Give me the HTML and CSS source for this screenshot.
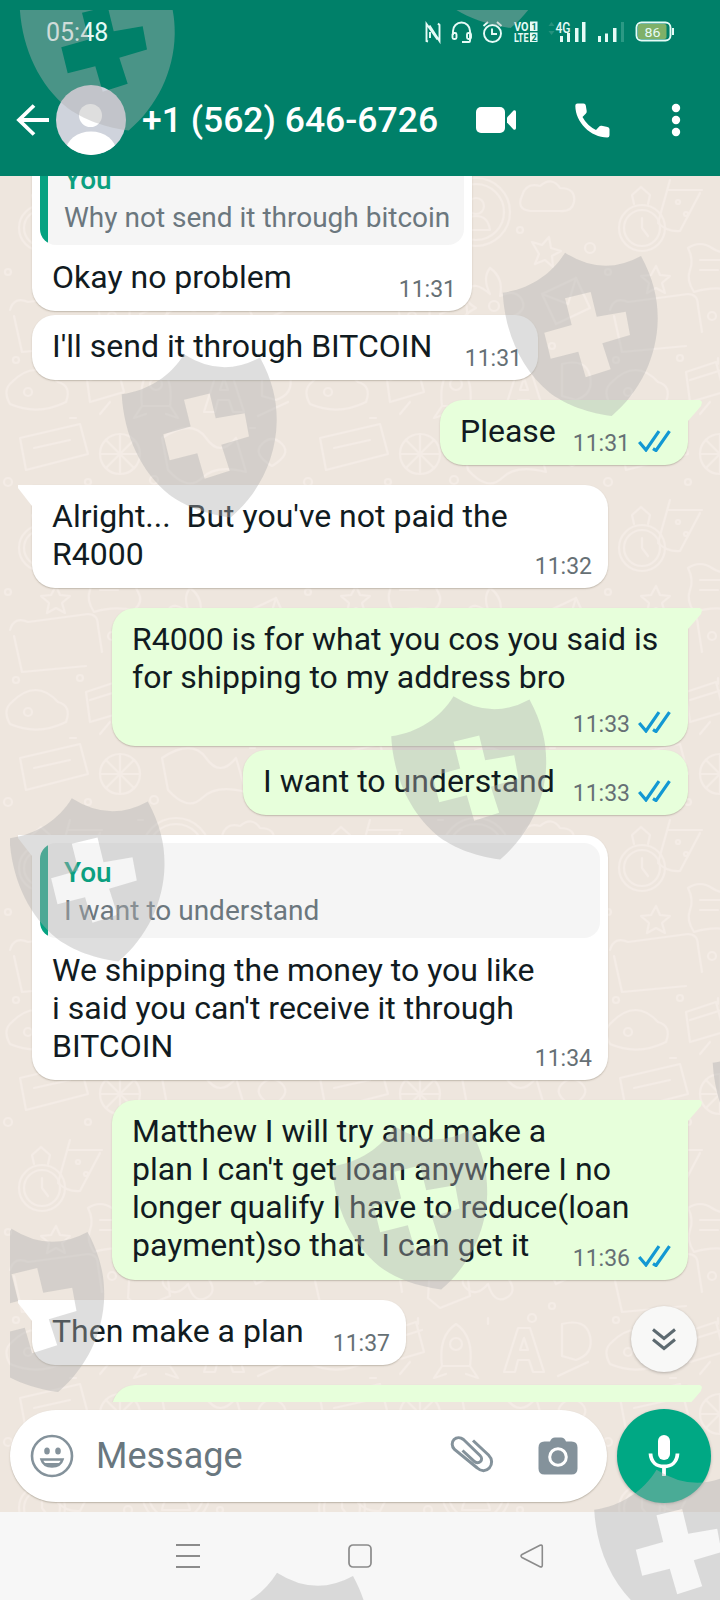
FILE: index.html
```html
<!DOCTYPE html>
<html lang="en">
<head>
<meta charset="utf-8">
<title>Chat</title>
<link rel="stylesheet" href="styles.css">
</head>
<body>
<svg class="defs" width="0" height="0">
  <defs>
    <symbol id="ticks" viewBox="0 0 33 22"><path d="M1.2 12 8 20 21 1.2M15 18.600l3 1.900L31.500 1.200" fill="none" stroke="#1398d3" stroke-width="3.200"/></symbol>
    <pattern id="doodles" width="300" height="320" patternUnits="userSpaceOnUse">
      <g fill="none" stroke="#f4ece6" stroke-width="2.200" stroke-linejoin="round" stroke-linecap="round">
        <circle cx="42" cy="52" r="23"/><circle cx="42" cy="52" r="18"/><path d="M34 28l-2-9 9-8 9 8-2 9M42 42v10l6 8"/>
        <path d="M70 4 58 47q9 9 22 8l20-38M68 14h34"/><circle cx="78" cy="26" r="2"/><circle cx="86" cy="38" r="2"/>
        <path d="M56 90l4 9 10 1-8 7 3 10-9-5-9 5 2-10-8-7 10-1z"/>
        <path d="M88 72q12-8 24 0t24 2q-4 12 2 22t-4 18q-22-4-40 2-8-12-4-22t-2-22zM100 84h22M100 94h18"/>
        <path d="M10 134q4-14 18-8l60-8q10 0 10 12l4 26M14 140l8 36 64-6"/>
        <circle cx="176" cy="36" r="34"/><circle cx="176" cy="36" r="28"/><circle cx="176" cy="30" r="8"/><path d="M162 54q2-14 14-14t14 14z"/>
        <path d="M222 20q4-14 18-10 12-10 20 2 16 0 14 14-2 10-14 9h-30q-14-2-8-15z"/>
        <path d="M232 66l10 3 7-8 2 11 10 3-9 5 1 11-8-7-10 4 4-10z"/>
        <path d="M130 130l24-12 12 8 4 34-30 12-12-10zM140 138l20-8"/>
        <path d="M190 92q14 10 10 28 16-8 22 4t-14 18q10 14-2 20t-18-14q-12 14-22 4t10-20q-14-8-8-18t22 4q-8-16 0-26z"/><circle cx="194" cy="130" r="5"/>
        <path d="M242 118l34-16 14 30-34 16zM242 118l26 10 8-26"/>
        <path d="M12 206q24-24 46 0 14 4 8 20-28 14-56 2-8-14 2-22z"/><circle cx="28" cy="216" r="4"/>
        <path d="M86 196l30-10 8 30-34 10zM90 204l32-10M100 238l10-12"/>
        <path d="M142 230q-4-30 14-42 18 12 14 42zM142 230l-8 12 12-4M170 230l8 12-12-4"/><circle cx="156" cy="208" r="6"/>
        <path d="M204 236l14-44h12l14 44h-11l-4-12h-11l-3 12zM220 214h8l-4-12z"/>
        <path d="M262 188q24-6 28 12t-14 24l-14-4zM258 240l30-14"/>
        <path d="M20 262l60-14 8 30-62 16zM34 272l36-8"/><circle cx="120" cy="278" r="20"/><path d="M106 264l28 28M134 264l-28 28M120 258v40M100 278h40"/>
        <path d="M162 262q30-20 44 0t30 0l10 34q-30-8-44 6t-34-8z"/><path d="M262 268q10-10 20 0t-10 22q-20-12-10-22z"/>
        <circle cx="128" cy="54" r="4"/><circle cx="112" cy="140" r="4"/><circle cx="232" cy="182" r="4"/><circle cx="80" cy="182" r="3"/><circle cx="8" cy="96" r="3"/><circle cx="290" cy="72" r="5"/><circle cx="220" cy="54" r="3"/><circle cx="16" cy="184" r="3"/><circle cx="154" cy="304" r="4"/><circle cx="88" cy="306" r="3"/><circle cx="252" cy="170" r="3"/><circle cx="8" cy="306" r="4"/><path d="M138 4h5M118 182v6M188 182v6M70 242h6M250 252h5"/>
      </g>
    </pattern>
  </defs>
</svg>
<div class="phone">
  <header class="header">
    <div class="status">
      <span class="clock">05:48</span>
      <svg class="status-icons" width="256" height="30" viewBox="0 0 256 30">
        <g fill="none" stroke="#e6fbf7" stroke-width="1.900">
          <path d="M4 24.500 2.500 24V7L13.500 22.500M5.500 8.500 15.500 24V8L14 6.500M6 15v6"/>
          <path d="M29 18v-4a8.500 8.500 0 0 1 17 0v4M46 18v6q0 1-1 1h-7"/>
          <rect x="28.500" y="16" width="4" height="6" rx="1.500"/><rect x="43" y="16" width="4" height="6" rx="1.500"/>
          <circle cx="68.500" cy="16.500" r="8.500"/><path d="M68 11.500v5.500h5M59.500 9l4.500-4M77.500 9 73 5"/>
          <rect x="212.500" y="5.500" width="34" height="18" rx="5"/>
        </g>
        <rect x="214" y="7" width="28.500" height="15" rx="2" fill="#7fb068"/><path d="M248 11h2v7h-2z" fill="#e6fbf7"/>
        <g fill="#e6fbf7">
          <rect x="106" y="4.500" width="7.500" height="9.500"/><rect x="106" y="15.500" width="7.500" height="9.500"/>
          <path d="M136 19h3v6h-3zM143 16h3v9h-3zM151 11h3.500v14H151zM158 5h3.500v20H158zM174 19h3v6h-3zM181 16.500h3v8.500h-3zM189 11h3.500v14H189z"/>
          <text x="90" y="14" class="tiny" textLength="14.500" lengthAdjust="spacingAndGlyphs">VO</text>
          <text x="90" y="25" class="tiny" textLength="14.500" lengthAdjust="spacingAndGlyphs">LTE</text>
          <text x="131.500" y="15.500" class="net" textLength="15" lengthAdjust="spacingAndGlyphs">4G</text>
          <text x="220.500" y="19.500" class="batt" textLength="16" lengthAdjust="spacingAndGlyphs">86</text>
        </g>
        <text x="107.500" y="12.800" class="sim">1</text><text x="107.500" y="23.800" class="sim">2</text>
        <path d="M197 5h3v20h-3z" fill="#2b9984"/><path d="M124.500 9l3-4 3 4zM124.500 14l3 4 3-4z" fill="#26917d"/>
      </svg>
    </div>
    <div class="contact">
      <svg width="34" height="34" viewBox="0 0 34 34"><path d="M33 17H3M18 2.500 3 17l15 14.500" fill="none" stroke="#fff" stroke-width="3.800"/></svg>
      <svg class="avatar" width="70" height="70" viewBox="0 0 70 70"><clipPath id="round"><circle cx="35" cy="35" r="35"/></clipPath><g clip-path="url(#round)"><path fill="#cfd3dc" d="M0 0h70v70H0z"/><circle cx="34.500" cy="30.500" r="11.500" fill="#fff"/><ellipse cx="35" cy="66" rx="25" ry="19.500" fill="#fff"/></g></svg>
      <h1 class="name">+1 (562) 646-6726</h1>
      <svg class="video" width="42" height="28" viewBox="0 0 42 28"><rect x="1" y="1" width="29" height="26" rx="5" fill="#fff"/><path d="M32 11.500 38.500 4.500q2.500-1 2.500 1.500v16q0 2.500-2.500 1.500L32 16.500z" fill="#fff"/></svg>
      <svg class="call" width="35" height="35" viewBox="0 0 35 35"><path fill="#fff" d="M2.500.5h6q2 0 2.300 2l.9 5.500q.3 1.700-1 2.800L7.500 14q4.500 8.500 13.500 13l3-3.300q1.100-1.200 2.700-.9l5.800 1.100q2 .4 2 2.300v6q0 2.300-2.200 2.300C15.500 34.500.5 19.500.3 2.800Q.3.5 2.500.5z"/></svg>
      <svg class="more" width="10" height="34" viewBox="0 0 10 34"><g fill="#fff"><circle cx="5" cy="5" r="4.200"/><circle cx="5" cy="17" r="4.200"/><circle cx="5" cy="29" r="4.200"/></g></svg>
    </div>
  </header>

  <main class="body">
    <svg class="wallpaper" width="720" height="1336"><rect width="720" height="1336" fill="url(#doodles)"/></svg>
    <section class="chat">
      <article class="bubble in b1">
        <div class="quote"><b>You</b><span>Why not send it through bitcoin</span></div>
        <div class="row"><p>Okay no problem</p><div class="meta">11:31</div></div>
      </article>
      <article class="bubble in b2"><div class="row"><p>I'll send it through BITCOIN</p><div class="meta">11:31</div></div></article>
      <article class="bubble out tail turn b3"><div class="row"><p>Please</p><div class="meta">11:31<svg><use href="#ticks"/></svg></div></div></article>
      <article class="bubble in tail turn b4"><div class="row"><p>Alright...&nbsp; But you've not paid the<br>R4000</p><div class="meta">11:32</div></div></article>
      <article class="bubble out tail turn wide b5"><div class="row"><p>R4000 is for what you cos you said is<br>for shipping to my address bro</p><div class="meta">11:33<svg><use href="#ticks"/></svg></div></div></article>
      <article class="bubble out b6"><div class="row"><p>I want to understand</p><div class="meta">11:33<svg><use href="#ticks"/></svg></div></div></article>
      <article class="bubble in tail turn b7">
        <div class="quote"><b>You</b><span>I want to understand</span></div>
        <div class="row"><p>We shipping the money to you like<br>i said you can't receive it through<br>BITCOIN</p><div class="meta">11:34</div></div>
      </article>
      <article class="bubble out tail turn wide b8"><div class="row"><p>Matthew I will try and make a<br>plan I can't get loan anywhere I no<br>longer qualify I have to reduce(loan<br>payment)so that&nbsp; I can get it</p><div class="meta">11:36<svg><use href="#ticks"/></svg></div></div></article>
      <article class="bubble in tail turn b9"><div class="row"><p>Then make a plan</p><div class="meta">11:37</div></div></article>
      <article class="bubble out tail turn wide b10"></article>
    </section>
    <button class="jump" aria-label="Latest messages"><svg width="26" height="24" viewBox="0 0 26 24"><path d="M2 2.500l11 9 11-9M2 12.500l11 9 11-9" fill="none" stroke="#5d6a70" stroke-width="3"/></svg></button>
    <footer class="composer">
      <div class="field">
        <svg width="44" height="44" viewBox="0 0 44 44"><g fill="none" stroke="#84929b" stroke-width="2.600"><circle cx="22" cy="22" r="20"/><path d="M11.500 25.500h21q-2 7-10.500 7t-10.500-7z"/></g><g fill="#84929b"><ellipse cx="17" cy="17" rx="2.800" ry="3.600"/><ellipse cx="28" cy="17" rx="2.800" ry="3.600"/><path d="M14 29h16q-3 4-8 4t-8-4z"/></g></svg>
        <span class="hint">Message</span>
        <svg class="clip" width="44" height="42" viewBox="0 0 44 42"><path d="M23 5.500 38.500 20c4 4 4 9.500.8 13s-8.300 3.500-12 0L4.500 14.500C1.500 11.500 1.500 7 4 4.500s6.500-2.500 9.500 0L30 20.500c2 2 2 4.500.5 6s-4 1.500-6 0L12.500 15.500" fill="none" stroke="#84929b" stroke-width="3"/></svg>
        <svg class="cam" width="40" height="38" viewBox="0 0 40 38"><path fill="#84929b" d="M12 4.500Q13.500.5 17 .5h6q3.500 0 5 4h5.500q6 0 6 6v21q0 6-6 6h-27q-6 0-6-6v-21q0-6 6-6z"/><circle cx="20" cy="20" r="8.300" fill="none" stroke="#fff" stroke-width="3"/></svg>
      </div>
      <button class="mic" aria-label="Record"><svg width="32" height="42" viewBox="0 0 32 42"><rect x="10" y="0" width="12" height="25" rx="6" fill="#fff"/><path d="M2.500 18.500C3 27 8.500 31.500 16 31.500S29 27 29.500 18.500M16 31.500V41" fill="none" stroke="#fff" stroke-width="3.800"/></svg></button>
    </footer>
  </main>

  <nav class="navbar">
    <svg width="24" height="26" viewBox="0 0 24 26"><path d="M0 2h24M0 13h24M0 24h24" stroke="#8b8b8b" stroke-width="2"/></svg>
    <svg width="24" height="24" viewBox="0 0 24 24"><rect x="1" y="1" width="22" height="22" rx="4" fill="none" stroke="#8b8b8b" stroke-width="1.700"/></svg>
    <svg width="24" height="24" viewBox="0 0 24 24"><path d="M2 10.500 20 1.300q2.300-.8 2.300 1.500v18.400q0 2.300-2.300 1.500L2 13.500q-2-1.500 0-3z" fill="none" stroke="#8b8b8b" stroke-width="1.600"/></svg>
  </nav>

  <svg class="shields" width="720" height="1600" viewBox="0 0 720 1600">
    <defs>
      <path id="shield" fill-rule="evenodd" d="M.7 40.700C28 37 50 22 63 .7Q101 25 139 4C152 28 156 48 155.700 68 155 105 138 140 109.700 164 80 160 60 150 48 141 20 118 3 82 .7 40.700zM63 46.300 88.700 40 94.700 64.700 123.700 59.700 128 83 100.300 91.300 108.700 117.300 83.700 125.300 76.300 99.700 48.700 106.700 42.300 80.700 69.700 73z"/>
      <clipPath id="inset"><path d="M10 10h710v1590H10z"/></clipPath>
    </defs>
    <g clip-path="url(#inset)" fill="#b0b0b0" fill-opacity=".42">
      <use href="#shield" x="19" y="-33.500"/><use href="#shield" x="401" y="-136"/>
      <use href="#shield" x="502" y="252"/><use href="#shield" x="121" y="353.500"/>
      <use href="#shield" x="390.500" y="695.500"/><use href="#shield" x="8.800" y="797.500"/>
      <use href="#shield" x="712" y="1022"/><use href="#shield" x="331.500" y="1125.500"/>
      <use href="#shield" x="-51.500" y="1228"/><use href="#shield" x="593.500" y="1469"/><use href="#shield" x="214" y="1572"/>
    </g>
  </svg>
</div>
</body>
</html>
```
FILE: styles.css
```css
* { box-sizing: border-box; margin: 0; }
body { font-family: Roboto, "Liberation Sans", sans-serif; background: #f7f7f7; }
button { border: 0; padding: 0; font: inherit; }
svg { display: block; flex: none; }
.defs { position: absolute; }
.phone { position: relative; width: 720px; height: 1600px; overflow: hidden; display: flex; flex-direction: column; }

.header { height: 176px; flex: none; background: #008069; color: #fff; }
.status { display: flex; justify-content: space-between; height: 64px; padding: 17px 40px 0 46px; }
.clock { font-size: 25px; line-height: 31px; color: #e6fbf7; }
.tiny { font: bold 12.5px Roboto, sans-serif; }
.net { font: 500 14px Roboto, sans-serif; }
.batt { font: 13px Roboto, sans-serif; }
.sim { font: bold 9px Roboto, sans-serif; fill: #008069; }
.contact { display: flex; align-items: center; height: 112px; padding-left: 16px; }
.avatar { margin-left: 6px; }
.name { margin-left: 16px; width: 299px; font-size: 35.5px; font-weight: 500; line-height: 42px; white-space: nowrap; }
.video { margin-left: 34px; }
.call { margin-left: 58px; }
.more { margin-left: 61px; }

.body { position: relative; height: 1336px; flex: none; background: #eee6de; display: flex; flex-direction: column; }
.wallpaper { position: absolute; inset: 0; }
.chat { position: relative; height: 1226px; overflow: hidden; padding: 0 32px; display: flex; flex-direction: column; }
.bubble { position: relative; flex: none; margin-top: 4px; border-radius: 23px; color: #111b21; box-shadow: 0 1px 1.500px rgba(90, 80, 60, .3); }
.in { align-self: flex-start; background: #fff; }
.out { align-self: flex-end; background: #e7ffdb; }
.turn { margin-top: 20px; }
.wide { width: 576px; }
.in.tail { border-top-left-radius: 0; }
.out.tail { border-top-right-radius: 0; }
.tail::before { content: ""; position: absolute; top: 0; width: 15px; height: 21px; }
.in.tail::before { right: 100%; background: #fff; clip-path: polygon(1px 0, 100% 0, 100% 100%, 1px 3px); }
.out.tail::before { left: 100%; background: #e7ffdb; clip-path: polygon(0 0, 12px 0, 14px 2px, 13px 6px, 0 100%); }
.row { display: grid; padding: 12px 16px 8px 20px; }
.row > * { grid-area: 1 / 1; }
.row p { font-size: 32px; line-height: 38px; padding-bottom: 7px; white-space: nowrap; }
.meta { justify-self: end; align-self: end; display: flex; align-items: center; font-size: 23px; line-height: 26px; color: #667075; }
.meta svg { width: 33px; height: 22px; margin: 0 1px 5px 8px; }
.quote { margin: 8px 8px 0; height: 95px; padding: 11px 16px 0 24px; border-radius: 16px; background: linear-gradient(90deg, #06a281 8px, #f5f5f5 8px); display: flex; flex-direction: column; font-size: 28px; line-height: 38px; white-space: nowrap; }
.quote b { font-weight: 500; color: #0b9f80; }
.quote span { color: #6b777e; }
.quote + .row { padding-top: 13px; }

.b1 { width: 440px; margin-top: -34px; }
.b2 { width: 506px; }
.b3 { width: 248px; }
.b4 { width: 576px; }
.b5 p { padding-bottom: 42px; }
.b6 { width: 445px; }
.b7 { width: 576px; }
.b8 p { padding-bottom: 8px; }
.b9 { width: 374px; }
.b10 { height: 80px; }

.jump { position: absolute; left: 631px; top: 1130px; width: 66px; height: 66px; border-radius: 50%; background: #f8f8f7; box-shadow: 0 1px 3px rgba(0, 0, 0, .25); display: grid; place-items: center; }
.composer { position: relative; display: flex; align-items: center; gap: 10px; height: 110px; padding: 0 9px 2px 10px; }
.field { width: 597px; height: 92px; border-radius: 46px; background: #fff; box-shadow: 0 1px 1.500px rgba(90, 80, 60, .35); display: flex; align-items: center; padding: 0 29px 0 20px; }
.hint { flex: 1; margin-left: 22px; font-size: 36px; color: #69777f; }
.clip { margin-right: 44px; }
.mic { width: 94px; height: 94px; border-radius: 50%; background: #00a884; display: grid; place-items: center; box-shadow: 0 1px 3px rgba(0, 0, 0, .25); }
.navbar { flex: 1; background: #f7f7f7; display: flex; justify-content: space-between; align-items: center; padding: 0 176px; }
.shields { position: absolute; inset: 0; pointer-events: none; }
```
